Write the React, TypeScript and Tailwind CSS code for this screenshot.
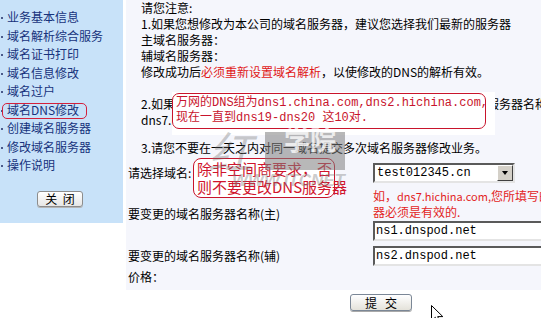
import React from "react";

const side = [
  "业务基本信息",
  "域名解析综合服务",
  "域名证书打印",
  "域名信息修改",
  "域名过户",
  "域名DNS修改",
  "创建域名服务器",
  "修改域名服务器",
  "操作说明",
];

function Inset({ children, w }: { children: React.ReactNode; w: string }) {
  return (
    <div
      className={`${w} h-[20px] flex items-center bg-white border-2 border-t-[#5a5a5a] border-l-[#5a5a5a] border-b-[#e4e4e4] border-r-[#e4e4e4] pl-[1px] font-['Liberation_Mono','Noto_Sans_CJK_SC',monospace] text-[12px] text-black whitespace-nowrap overflow-hidden`}
    >
      {children}
    </div>
  );
}

export default function App() {
  return (
    <div className="relative w-[541px] h-[318px] overflow-hidden bg-white text-[12px] text-black font-['Noto_Sans_CJK_SC',sans-serif]">
      <div className="flex items-start">
        {/* sidebar */}
        <aside className="w-[123px] h-[223px] shrink-0 bg-[#c8e2f9] pt-[8px] text-[#17327c]">
          {side.map((s, i) => (
            <div key={i} className="relative flex items-center h-[18.5px] pl-[7px] whitespace-nowrap leading-none">
              <span className="absolute left-[1px] top-[9px] w-[2px] h-[2px] bg-[#4a5a8a]" />
              {s}
              {i === 5 && (
                <span className="absolute left-[2px] top-[2px] w-[85px] h-[16px] border border-[#d3203c] rounded-[5px]" />
              )}
            </div>
          ))}
          <div className="ml-[37px] mt-[16px] w-[46px] h-[16px] flex items-center justify-center rounded-[3px] border border-[#8d8d8d] bg-gradient-to-b from-white to-[#e6e6e6] shadow-[0_1px_0_#b5b5b5] text-black leading-none">
            关&nbsp;&nbsp;闭
          </div>
        </aside>
        <div className="w-[3px] shrink-0" />
        {/* main */}
        <div className="w-[440px] shrink-0">
          <div className="bg-[#f5f6fc] pb-[5px]">
            <div className="pl-[15px] leading-[16px] whitespace-nowrap">
              <div>请您注意:</div>
              <div>1.如果您想修改为本公司的域名服务器，建议您选择我们最新的服务器</div>
              <div>主域名服务器：</div>
              <div>辅域名服务器：</div>
              <div>
                修改成功后<span className="text-[#e01818]">必须重新设置域名解析</span>，以使修改的DNS的解析有效。
              </div>
              <div className="h-[16px]" />
              <div>2.如果您想修改为其他公司的域名服务器，请在下面输入您完整的服务器名称，如</div>
              <div>dns7.hichina.com，dns8.hichina.com。</div>
              <div className="mt-[12px]">3.请您不要在一天之内对同一域名提交多次域名服务器修改业务。</div>
            </div>
            <div className="mt-[4px] pl-[2px] grid grid-cols-[245px_1fr] whitespace-nowrap">
              <div className="h-[25px] flex items-center">请选择域名:</div>
              <div className="h-[25px] flex items-center">
                <div className="w-[142px] h-[20px] flex items-center bg-white border-2 border-t-[#5a5a5a] border-l-[#5a5a5a] border-b-[#e4e4e4] border-r-[#e4e4e4]">
                  <span className="flex-1 pl-[2px] font-['Liberation_Mono',monospace] text-[12px]">test012345.cn</span>
                  <span className="w-[16px] h-[16px] bg-[#d4d0c8] border border-t-white border-l-white border-b-[#404040] border-r-[#404040] flex items-center justify-center">
                    <span className="w-0 h-0 border-l-[3.5px] border-r-[3.5px] border-t-[4px] border-l-transparent border-r-transparent border-t-black" />
                  </span>
                </div>
              </div>

              <div className="h-[58px] flex items-center">要变更的域名服务器名称(主)</div>
              <div className="h-[58px] pt-[3px]">
                <div className="leading-[16px] text-[#e31e24]">
                  <div>
                    如，<span className="text-[11px]">dns7.hichina.com,</span>您所填写的服务
                  </div>
                  <div>器必须是有效的.</div>
                </div>
                <div className="mt-[1px]">
                  <Inset w="w-[200px]">ns1.dnspod.net</Inset>
                </div>
              </div>

              <div className="h-[26px] flex items-center">要变更的域名服务器名称(辅)</div>
              <div className="h-[26px] flex items-center">
                <Inset w="w-[200px]">ns2.dnspod.net</Inset>
              </div>

              <div className="h-[16px] flex items-center">价格：</div>
              <div className="h-[16px]" />
            </div>
          </div>
          <div className="ml-[224px] mt-[4px] w-[62px] h-[17px] flex items-center justify-center rounded-[3px] border border-[#7b8796] bg-gradient-to-b from-white to-[#e4e2da] shadow-[0_1px_0_#a9a9a9] leading-none">
            提&nbsp;&nbsp;&nbsp;交
          </div>
        </div>
      </div>

      {/* annotation 1 */}
      <div className="absolute left-[172px] top-[92px] w-[323px] h-[43px] bg-white">
        <div className="mt-[1px] w-[314px] h-[36px] border border-[#c8142c] rounded-[7px] pl-[3px] pt-[2px] leading-[15px] text-[12px] text-[#c8142c] whitespace-nowrap font-['Liberation_Mono','Noto_Sans_CJK_SC',monospace]">
          <div>万网的DNS组为dns1.china.com,dns2.hichina.com,</div>
          <div>现在一直到dns19-dns20 这10对.</div>
        </div>
      </div>

      {/* annotation 2 */}
      <div className="absolute left-[193px] top-[158px] w-[142px] h-[40px] bg-white border border-[#c8142c] rounded-[8px] pl-[3px] pt-[1px] leading-[18px] text-[15px] text-[#d0142c] whitespace-nowrap">
        <div>除非空间商要求，否</div>
        <div>则不要更改DNS服务器</div>
      </div>

      {/* watermark */}
      <div className="absolute left-[265px] top-[132px] w-[80px] h-[38px] bg-[#7d7d7d]/55 pointer-events-none" />
      <div className="absolute left-[284px] top-[126px] text-[26px] font-bold text-white/75 leading-none pointer-events-none whitespace-nowrap">
        学院
      </div>
      <div className="absolute left-[208px] top-[128px] text-[44px] italic text-[#6e6e6e]/35 leading-none pointer-events-none">
        红
      </div>
      <div className="absolute left-[232px] top-[172px] text-[17px] italic font-bold text-[#7a7a7a]/40 leading-none pointer-events-none whitespace-nowrap font-['Liberation_Sans',sans-serif]">
        WWW.ITCNET
      </div>

      {/* cursor */}
      <svg className="absolute left-[431px] top-[305px]" width="13" height="20" viewBox="0 0 13 20">
        <path d="M0.5 0.5 L0.5 16 L4.3 12.3 L7 18.7 L9.3 17.7 L6.7 11.6 L11.8 11.6 Z" fill="white" stroke="black" strokeWidth="1" />
      </svg>
    </div>
  );
}
